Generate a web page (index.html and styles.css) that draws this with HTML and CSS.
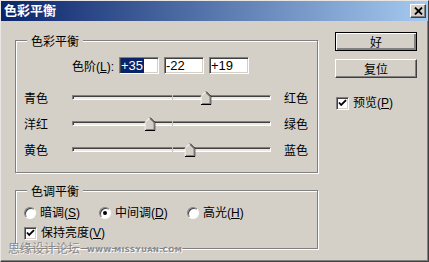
FILE: index.html
```html
<!DOCTYPE html>
<html lang="zh-CN">
<head>
    <meta charset="UTF-8">
    <title>色彩平衡</title>
    <link rel="stylesheet" href="styles.css">
</head>
<body>

<div class="window">
    <div class="titlebar">
        <span class="title">色彩平衡</span>
        <button class="close-btn" aria-label="关闭">
            <svg width="9" height="8" viewBox="0 0 9 8"><path d="M1 0.5 L8 7.5 M8 0.5 L1 7.5" stroke="#000" stroke-width="1.8"/></svg>
        </button>
    </div>

    <div class="dialog-body">
        <div class="left-col">
            <!-- Color balance group -->
            <div class="group balance">
                <div class="group-title">色彩平衡</div>
                <div class="levels-row">
                    <span class="levels-label">色阶(<u>L</u>):</span>
                    <div class="edit"><span class="sel">+35</span></div>
                    <div class="edit">-22</div>
                    <div class="edit">+19</div>
                </div>

                <div class="slider-row">
                    <span>青色</span>
                    <div class="track">
                        <span class="tick"></span>
                        <svg class="thumb" style="left: 67.5%" width="11" height="14" viewBox="0 0 11 14"><path d="M0.5 13.5 V5.5 L5.5 0.5 L10.5 5.5 V13.5 Z" fill="#d4d0c8"/><path d="M0.5 13 V5.5 L5.5 0.5" stroke="#fff" fill="none"/><path d="M5.5 0.5 L10.5 5.5 V13.5 H0.5" stroke="#000" fill="none"/><path d="M5.5 1.9 L9.5 5.9 V12.5 H1.5" stroke="#808080" fill="none"/></svg>
                    </div>
                    <span class="right-label">红色</span>
                </div>
                <div class="slider-row">
                    <span>洋红</span>
                    <div class="track">
                        <span class="tick"></span>
                        <svg class="thumb" style="left: 39%" width="11" height="14" viewBox="0 0 11 14"><path d="M0.5 13.5 V5.5 L5.5 0.5 L10.5 5.5 V13.5 Z" fill="#d4d0c8"/><path d="M0.5 13 V5.5 L5.5 0.5" stroke="#fff" fill="none"/><path d="M5.5 0.5 L10.5 5.5 V13.5 H0.5" stroke="#000" fill="none"/><path d="M5.5 1.9 L9.5 5.9 V12.5 H1.5" stroke="#808080" fill="none"/></svg>
                    </div>
                    <span class="right-label">绿色</span>
                </div>
                <div class="slider-row">
                    <span>黄色</span>
                    <div class="track">
                        <span class="tick"></span>
                        <svg class="thumb" style="left: 59.5%" width="11" height="14" viewBox="0 0 11 14"><path d="M0.5 13.5 V5.5 L5.5 0.5 L10.5 5.5 V13.5 Z" fill="#d4d0c8"/><path d="M0.5 13 V5.5 L5.5 0.5" stroke="#fff" fill="none"/><path d="M5.5 0.5 L10.5 5.5 V13.5 H0.5" stroke="#000" fill="none"/><path d="M5.5 1.9 L9.5 5.9 V12.5 H1.5" stroke="#808080" fill="none"/></svg>
                    </div>
                    <span class="right-label">蓝色</span>
                </div>
            </div>

            <!-- Tone balance group -->
            <div class="group tone">
                <div class="group-title">色调平衡</div>
                <div class="radio-row">
                    <label class="radio-item"><span class="radio"></span><span>暗调(<u>S</u>)</span></label>
                    <label class="radio-item"><span class="radio checked"></span><span>中间调(<u>D</u>)</span></label>
                    <label class="radio-item"><span class="radio"></span><span>高光(<u>H</u>)</span></label>
                </div>
                <label class="check-item">
                    <span class="checkbox"><svg width="11" height="11" viewBox="0 0 11 11"><path d="M2 4.5 L4.2 7 L9 2.2" stroke="#000" stroke-width="1.8" fill="none"/></svg></span>
                    <span>保持亮度(<u>V</u>)</span>
                </label>
            </div>
        </div>

        <div class="right-col">
            <button class="btn default">好</button>
            <button class="btn">复位</button>
            <label class="check-item preview">
                <span class="checkbox"><svg width="11" height="11" viewBox="0 0 11 11"><path d="M2 4.5 L4.2 7 L9 2.2" stroke="#000" stroke-width="1.8" fill="none"/></svg></span>
                <span>预览(<u>P</u>)</span>
            </label>
        </div>
    </div>

    <div class="watermark"><span>思缘设计论坛</span><span class="wm-url">WWW.MISSYUAN.COM</span></div>
</div>

</body>
</html>
```
FILE: styles.css
```css
* {
    box-sizing: border-box;
}
body {
    margin: 0;
    padding: 0;
    background-color: #d4d0c8;
    font-family: "Liberation Sans", "Noto Sans CJK SC", sans-serif;
    font-size: 12px;
    color: #000;
}
u {
    text-decoration: underline;
    text-underline-offset: 1px;
}
.window {
    position: relative;
    width: 429px;
    height: 262px;
    background-color: #d4d0c8;
    border: 1px solid;
    border-color: #e8e6e2 #404040 #404040 #e8e6e2;
    box-shadow: inset -1px -1px #808080;
    overflow: hidden;
}
.titlebar {
    height: 20px;
    display: flex;
    align-items: center;
    justify-content: space-between;
    padding: 0 2px 0 3px;
    background: linear-gradient(to right, #0a246a, #a6caf0);
}
.title {
    color: #fff;
    font-weight: 700;
    font-size: 13px;
    line-height: 16px;
}
.close-btn {
    width: 16px;
    height: 14px;
    padding: 0;
    display: flex;
    align-items: center;
    justify-content: center;
    background-color: #d4d0c8;
    border: 1px solid;
    border-color: #fff #404040 #404040 #fff;
    box-shadow: inset -1px -1px #808080;
}
.dialog-body {
    display: flex;
    align-items: flex-start;
    gap: 17px;
    padding: 11px 0 0 14px;
}
.left-col {
    width: 303px;
    margin-top: 8px;
}
.group {
    border: 1px solid #808080;
    box-shadow: inset 1px 1px #fff, 1px 1px #fff;
    padding: 0 8px;
}
.group-title {
    width: fit-content;
    margin: -6px 0 0 3px;
    padding: 0 4px;
    line-height: 14px;
    background-color: #d4d0c8;
}
.balance {
    padding-bottom: 10px;
}
.levels-row {
    display: flex;
    align-items: center;
    gap: 5px;
    margin-top: 8px;
    height: 17px;
}
.levels-label {
    width: 90px;
    text-align: right;
}
.edit {
    width: 40px;
    height: 17px;
    padding: 0 1px;
    background-color: #fff;
    border: 1px solid;
    border-color: #808080 #fff #fff #808080;
    box-shadow: inset 1px 1px #404040, inset -1px -1px #d4d0c8;
    font-size: 13px;
    line-height: 15px;
}
.edit .sel {
    display: inline-block;
    background-color: #0a246a;
    color: #fff;
    padding-right: 1px;
}
.levels-row + .slider-row {
    margin-top: 10px;
}
.slider-row {
    display: grid;
    grid-template-columns: 48px 199px 1fr;
    align-items: center;
    height: 26px;
}
.right-label {
    padding-left: 13px;
    white-space: nowrap;
}
.track {
    position: relative;
    height: 5px;
    background-color: #ece9e4;
    border: 1px solid;
    border-color: #808080 #fff #fff #808080;
    box-shadow: inset 1px 1px #404040;
}
.tick {
    position: absolute;
    left: 50%;
    top: -1px;
    width: 1px;
    height: 5px;
    background-color: #c8c4bc;
}
.thumb {
    position: absolute;
    top: -5px;
    transform: translateX(-50%);
}
.tone {
    margin-top: 17px;
    padding-bottom: 7px;
}
.radio-row {
    display: grid;
    grid-template-columns: 75px 88px auto;
    margin-top: 6px;
    height: 16px;
    align-items: center;
}
.radio-item,
.check-item {
    display: flex;
    align-items: center;
    gap: 4px;
    line-height: 16px;
    white-space: nowrap;
}
.radio {
    position: relative;
    width: 12px;
    height: 12px;
    border-radius: 50%;
    background-color: #fff;
    border: 1px solid;
    border-color: #808080 #fff #fff #808080;
    box-shadow: inset 1px 1px #404040;
}
.radio.checked::after {
    content: "";
    position: absolute;
    left: 3px;
    top: 3px;
    width: 4px;
    height: 4px;
    border-radius: 50%;
    background-color: #000;
}
.check-item {
    margin-top: 4px;
    height: 16px;
}
.checkbox {
    width: 13px;
    height: 13px;
    display: flex;
    align-items: center;
    justify-content: center;
    background-color: #fff;
    border: 1px solid;
    border-color: #808080 #fff #fff #808080;
    box-shadow: inset 1px 1px #404040, inset -1px -1px #d4d0c8;
}
.right-col {
    display: flex;
    flex-direction: column;
    width: 82px;
}
.btn {
    width: 82px;
    height: 19px;
    padding: 0;
    font-family: "Noto Sans CJK SC", sans-serif;
    font-size: 12px;
    line-height: 15px;
    background-color: #d4d0c8;
    border: 1px solid;
    border-color: #fff #404040 #404040 #fff;
    box-shadow: inset -1px -1px #808080;
}
.btn.default {
    border-color: #000;
    box-shadow: inset 1px 1px #fff, inset -2px -2px #808080;
}
.btn + .btn {
    margin-top: 8px;
}
.preview {
    margin-top: 17px;
    margin-left: 1px;
}
.watermark {
    position: absolute;
    left: 7px;
    top: 238px;
    display: flex;
    align-items: center;
    gap: 7px;
    color: #8a8a8a;
    font-size: 12px;
    line-height: 16px;
    text-shadow: 1px 1px 0 #f4f4f4;
}
.wm-url {
    font-family: "DejaVu Sans", sans-serif;
    font-size: 7px;
    font-weight: 700;
    letter-spacing: 0.5px;
    margin-top: 3px;
}
```
